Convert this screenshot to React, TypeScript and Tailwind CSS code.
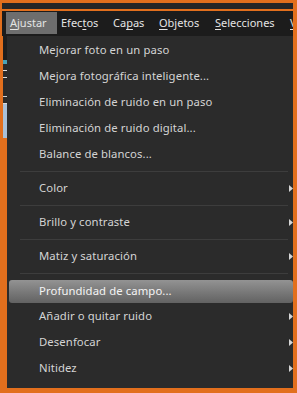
import React from "react";

const font = { fontFamily: '"Noto Sans", "Open Sans", "DejaVu Sans", sans-serif' };

function U({ children }: { children: React.ReactNode }) {
  return <span className="underline underline-offset-2 decoration-1">{children}</span>;
}

function Arrow() {
  return (
    <svg width="4" height="7" viewBox="0 0 4 7" className="absolute right-0 top-[10px]">
      <polygon points="0,0 4,3.5 0,7" fill="#d6d6d6" />
    </svg>
  );
}

function Item({ label, sub, active }: { label: string; sub?: boolean; active?: boolean }) {
  return (
    <div className="relative h-[26px]">
      {active && (
        <div className="absolute left-[2px] right-0 top-[3px] bottom-0 rounded-[3px] bg-gradient-to-b from-[#939393] to-[#626262]" />
      )}
      <div
        className={`relative h-full flex items-center pl-[32px] text-[11.3px] tracking-[0.1px] ${active ? "text-[#f4f4f4]" : "text-[#d4d4d4]"}`}
        style={{ ...font, paddingTop: active ? 2 : 0 }}
      >
        {label}
      </div>
      {sub && <Arrow />}
    </div>
  );
}

function Sep() {
  return (
    <div className="h-[8px] flex items-center">
      <div className="h-px w-full ml-[13px] mr-[5px] bg-[#3d3d3d]" />
    </div>
  );
}

export default function App() {
  return (
    <div className="w-[297px] h-[393px] bg-[#e26f1d] pt-[3px] pr-[4px] pb-[5px] overflow-hidden">
      <div className="flex flex-col h-full">
        <div className="h-[6px] bg-[#262626] ml-[2px]" />
        <div className="h-[2px]" />
        <div
          className="h-[25px] bg-[#1c1c1c] flex items-center ml-[2px] text-[11px] text-[#e4e4e4] relative overflow-hidden"
          style={font}
        >
          <div className="absolute left-[4px] top-[1px] w-[51px] h-[22px] bg-[#6e6e6e]" />
          <span className="absolute left-[8px]"><U>A</U>justar</span>
          <span className="absolute left-[59px]">Efec<U>t</U>os</span>
          <span className="absolute left-[111px]">Ca<U>p</U>as</span>
          <span className="absolute left-[157px]"><U>O</U>bjetos</span>
          <span className="absolute left-[213px]"><U>S</U>elecciones</span>
          <span className="absolute left-[288px]"><U>V</U></span>
        </div>
        <div className="flex flex-1 min-h-0">
          <div className="w-[4px] ml-[3px] flex flex-col">
            <div className="h-[24px] bg-[#1e1e1e]" />
            <div className="h-[4px] bg-[#4aa3b8]" />
            <div className="h-[40px] bg-[#2a2a2a] flex flex-col gap-[6px] pt-[6px]">
              <div className="h-[2px] bg-[#dcdcdc]" />
              <div className="h-[2px] bg-[#dcdcdc]" />
              <div className="h-[2px] bg-[#cfcfcf] mt-[12px]" />
              <div className="h-[2px] bg-[#dcdcdc]" />
            </div>
            <div className="h-[34px] bg-[#a9c0d8]" />
            <div className="flex-1 bg-[#e26f1d]" />
          </div>
          <div className="flex-1 bg-[#2b2b2b] pt-[1px]">
            <Item label="Mejorar foto en un paso" />
            <Item label="Mejora fotográfica inteligente..." />
            <Item label="Eliminación de ruido en un paso" />
            <Item label="Eliminación de ruido digital..." />
            <Item label="Balance de blancos..." />
            <Sep />
            <Item label="Color" sub />
            <Sep />
            <Item label="Brillo y contraste" sub />
            <Sep />
            <Item label="Matiz y saturación" sub />
            <Sep />
            <Item label="Profundidad de campo..." active />
            <Item label="Añadir o quitar ruido" sub />
            <Item label="Desenfocar" sub />
            <Item label="Nitidez" sub />
          </div>
        </div>
      </div>
    </div>
  );
}
